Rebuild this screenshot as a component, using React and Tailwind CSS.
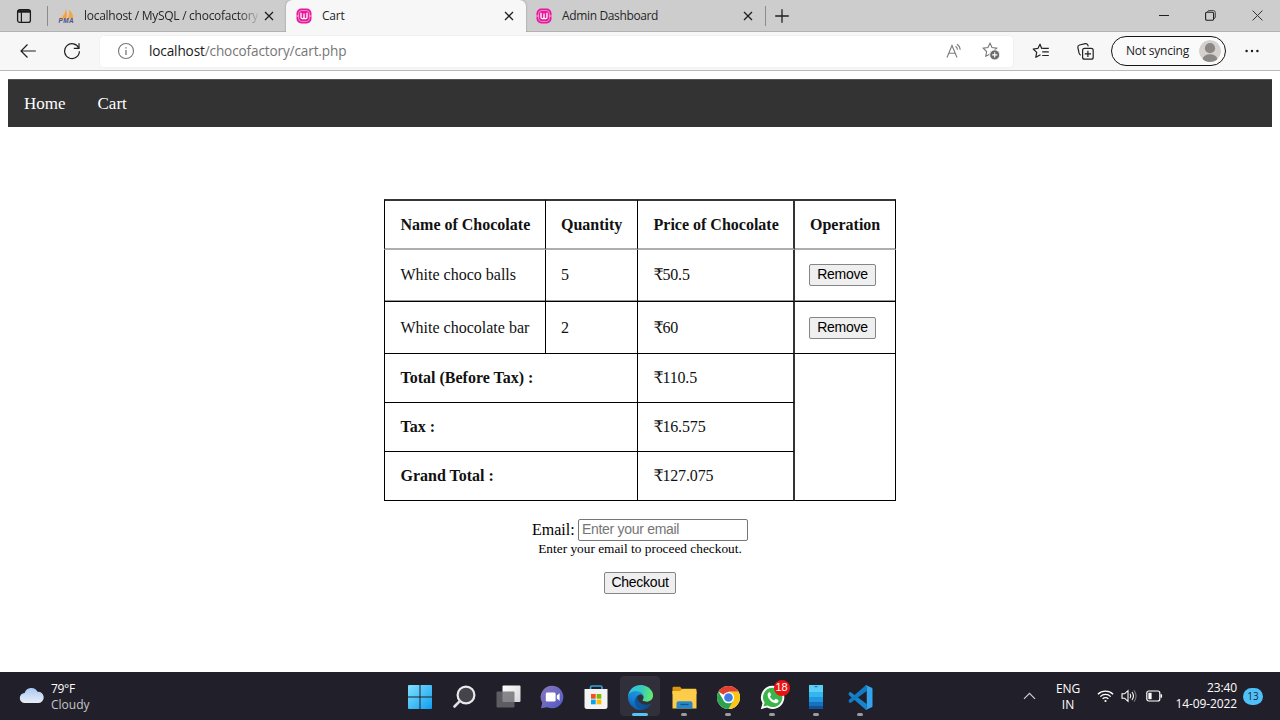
import React from "react";

const ui = "font-['Open_Sans',sans-serif]";
const serif = "font-['Liberation_Serif','DejaVu_Serif',serif]";

function TabsIcon() {
  return (
    <svg width="16" height="16" viewBox="0 0 16 16" className="block shrink-0" fill="none" stroke="#1b1b1b">
      <rect x="1.6" y="1.6" width="12.8" height="12.8" rx="2.2" strokeWidth="1.3" />
      <path d="M1.8 3.4h12.4" strokeWidth="2.6" />
      <path d="M5.4 4v10" strokeWidth="1.2" />
    </svg>
  );
}

function PmaIcon() {
  return (
    <svg width="18" height="16" viewBox="0 0 18 16" className="block shrink-0">
      <path d="M7.6 0.8C7.8 4 6 8.4 2.2 10.4h6.2C9.2 7 9 3.4 7.6 0.8z" fill="#f5a23c" />
      <path d="M11 1.6c3 2.4 4.4 6 4.2 8.8H9.6C11 7.8 11.4 4.6 11 1.6z" fill="#f3a74d" />
      <path d="M4.6 5.4C4 7.6 2.6 9.2 0.8 10.4h4z" fill="#f8be78" />
      <text x="0.6" y="15.4" fontSize="6.4" fontWeight="bold" fontStyle="italic" fill="#4b4f86" textLength="15" fontFamily="Liberation Sans">PMA</text>
    </svg>
  );
}

function WampIcon() {
  return (
    <svg width="16" height="16" viewBox="0 0 16 16" className="block shrink-0" fill="none">
      <rect x="0.5" y="0.5" width="15" height="15" rx="4.8" fill="#e8179b" />
      <rect x="2.6" y="2.5" width="10.8" height="11" rx="3" stroke="#f4a5d5" strokeWidth=".8" />
      <path d="M0.5 8h2.2M13.3 8h2.2" stroke="#f9c3e3" strokeWidth="1" />
      <path d="M5 4.8v4.4c0 2 2.9 2 3 .2V5.6v3.8c.1 1.8 3 1.8 3-.2V4.8" stroke="#fff" strokeWidth="1.3" />
    </svg>
  );
}

function Cross({ className = "" }) {
  return (
    <svg width="10" height="10" viewBox="0 0 10 10" className={"block shrink-0 " + className} fill="none" stroke="#1f1f1f" strokeWidth="1.3">
      <path d="M1 1l8 8M9 1l-8 8" />
    </svg>
  );
}

function Tab({ icon, label, active, className, labelClass }) {
  return (
    <div
      className={
        "flex h-8 items-center pl-[10px] pr-[12px] " +
        (active ? "rounded-t-md bg-[#f7f7f7] shadow-[0_0_2px_rgba(0,0,0,0.35)] [clip-path:inset(0_-2px_0_-2px)] " : "border-b border-[#b2b2b2] ") +
        className
      }
    >
      {icon}
      <span className={"whitespace-nowrap text-[12px] leading-[18px] text-[#262626] " + labelClass}>{label}</span>
      <Cross className="ml-auto" />
    </div>
  );
}

function TitleBar() {
  return (
    <div className="flex h-8 bg-[#cdcdcd]">
      <div className="flex h-8 w-[47px] items-center justify-center border-b border-[#b2b2b2] pl-[1px]"><TabsIcon /></div>
      <div className="flex h-8 w-px items-center border-b border-[#b2b2b2]"><div className="h-[20px] w-px bg-[#8b8b8b]" /></div>
      <Tab
        className="w-[238px]"
        icon={<PmaIcon />}
        label="localhost / MySQL / chocofactory"
        labelClass="ml-[8px] w-[174px] tracking-[-0.27px] [mask-image:linear-gradient(to_right,#000_155px,transparent_177px)]"
      />
      <Tab className="z-10 w-[240px]" active icon={<WampIcon />} label="Cart" labelClass="ml-[10px] tracking-[-0.2px]" />
      <Tab className="w-[239px]" icon={<WampIcon />} label="Admin Dashboard" labelClass="ml-[10px] tracking-[-0.36px]" />
      <div className="flex h-8 flex-1 items-center border-b border-[#b2b2b2]">
        <div className="h-[20px] w-px bg-[#8b8b8b]" />
        <svg width="14" height="14" viewBox="0 0 14 14" className="ml-[9px] block" stroke="#1f1f1f" strokeWidth="1.3"><path d="M7 .2v13.6M.2 7h13.6" /></svg>
        <svg width="10" height="10" viewBox="0 0 10 10" className="ml-auto block" stroke="#1f1f1f"><path d="M0 4.5h10" /></svg>
        <svg width="11" height="11" viewBox="0 0 11 11" className="ml-[36px] block" fill="none" stroke="#1f1f1f">
          <rect x="0.6" y="2.3" width="8" height="8" rx="1.2" strokeWidth="1.1" />
          <path d="M2.6 2V1.7Q2.8.6 4 .6h4.4q1.9 0 1.9 1.9V7q0 1.3-1.3 1.5" strokeWidth=".8" />
        </svg>
        <svg width="11" height="11" viewBox="0 0 11 11" className="ml-[36px] mr-[17px] block" stroke="#333"><path d="M.6.6l9.8 9.8M10.4.6L.6 10.4" /></svg>
      </div>
    </div>
  );
}

const star = "M8 1.3l2 4.3 4.7.6-3.4 3.3.8 4.7L8 12l-4.2 2.2.8-4.7L1.2 6.2l4.7-.6z";

function Toolbar() {
  return (
    <div className="flex h-[39px] items-center border-b border-[#b9b9b9] bg-[#f7f7f7]">
      <svg width="16" height="14" viewBox="0 0 16 14" className="ml-5 block" fill="none" stroke="#1f1f1f" strokeWidth="1.2"><path d="M15.8 7H.8M7.5.5L1 7l6.500 6.500" /></svg>
      <svg width="18" height="18" viewBox="0 0 18 18" className="ml-[27px] block" fill="none" stroke="#1f1f1f" strokeWidth="1.2">
        <path d="M15.800 6.200A7.400 7.400 0 1 0 16.400 9.200" /><path d="M16 1.200v5.200h-5.200" />
      </svg>
      <div className="ml-[19px] flex h-[31px] w-[913px] items-center rounded bg-white pl-[17px] pr-[13px] shadow-[0_0_2px_rgba(0,0,0,0.08)]">
        <svg width="18" height="18" viewBox="0 0 18 18" className="block" fill="none" stroke="#767676">
          <circle cx="9" cy="9" r="7.500" strokeWidth="1.100" /><path d="M9 8v5" strokeWidth="1.300" /><path d="M9 5.200v1.400" strokeWidth="1.400" />
        </svg>
        <span className="ml-[14px] whitespace-nowrap text-[13.6px] leading-[20px] tracking-[-0.14px] text-[#767676]"><span className="text-[#1a1a1a]">localhost</span>/chocofactory/cart.php</span>
        <svg width="17" height="16" viewBox="0 0 17 16" className="ml-auto block" fill="none" stroke="#7b7b7b" strokeWidth="1.100">
          <path d="M1 14.500L6 2.500l5 12M2.900 10.300h6.200" /><path d="M9.500 3.200q1.900 1.300 2 3.600M11 1.300q3 2 3.200 5.500" />
        </svg>
        <svg width="18" height="18" viewBox="0 0 18 18" className="ml-[19px] block" fill="none" stroke="#777" strokeWidth="1.100">
          <path d={star} /><circle cx="12.700" cy="12.900" r="5" fill="#6b6b6b" stroke="#fff" strokeWidth=".8" /><path d="M12.700 10.300v5.200M10.100 12.900h5.200" stroke="#fff" />
        </svg>
      </div>
      <svg width="18" height="16" viewBox="0 0 18 16" className="ml-[19px] block" fill="none" stroke="#222" strokeWidth="1.200" strokeLinejoin="round">
        <path d="M10.300 5.300H9.600L8 1.200 6 5.300l-4.800.7 3.500 3.400-.9 4.900 4.700-2.500" /><path d="M10.200 5.300h6.600M10.200 8.900h6.600M10.200 12.500h6.600" />
      </svg>
      <svg width="17" height="17" viewBox="0 0 17 17" className="ml-[27px] block" fill="none" stroke="#222" strokeWidth="1.200">
        <rect x="5.600" y="5.400" width="10.600" height="10.800" rx="2" /><path d="M10.900 7.700v6.200M7.800 10.800H14" /><path d="M3.700 12.200Q2.400 11.500 2 9.900L.9 4.600Q.6 2.600 2.500 2l5.800-1.300q1.800-.3 2.500 1.400l.5 1.300" />
      </svg>
      <div className="ml-[17px] flex h-[30px] w-[115px] items-center rounded-full border border-[#151515] bg-[#fafafa] pl-[14px]">
        <span className="w-[73px] whitespace-nowrap text-[12px] leading-[18px] tracking-[-0.22px] text-[#1a1a1a]">Not syncing</span>
        <svg width="22" height="22" viewBox="0 0 22 22" className="block">
          <clipPath id="avatar"><circle cx="11" cy="11" r="11" /></clipPath>
          <g clipPath="url(#avatar)"><circle cx="11" cy="11" r="11" fill="#d3d0ce" /><circle cx="11" cy="8.200" r="5.100" fill="#8b8784" /><ellipse cx="11" cy="19.200" rx="7.300" ry="5" fill="#8b8784" /></g>
        </svg>
      </div>
      <svg width="14" height="4" viewBox="0 0 14 4" className="ml-[19px] block" fill="#1a1a1a"><circle cx="1.600" cy="2" r="1.200" /><circle cx="7" cy="2" r="1.200" /><circle cx="12.400" cy="2" r="1.200" /></svg>
    </div>
  );
}

function Button({ children, className }) {
  return (
    <button className={"flex items-center justify-center rounded-[2px] border border-[#858585] bg-[#efefef] pb-[2px] font-['Liberation_Sans',Arial,sans-serif] text-[14px] leading-none tracking-[-0.25px] text-black " + className}>
      {children}
    </button>
  );
}

function Price({ amount }) {
  return <span><span className="tracking-[-1.3px]">₹</span><span className="tracking-[-0.15px]">{amount}</span></span>;
}

const totals = [
  { label: "Total (Before Tax) :", value: "110.5" },
  { label: "Tax :", value: "16.575" },
  { label: "Grand Total :", value: "127.075" },
];

function CartTable() {
  const base = "flex items-center whitespace-nowrap border-black ";
  const cell = base + "pl-[15.5px] ";
  const lastCol = base + "pl-[15px] ";
  const head = "border-t-2 border-b-2 border-t-[#363636] border-b-[#aeaeae] font-bold ";
  const first = "pb-px shadow-[inset_0_-1px_0_#999] ";
  return (
    <div className="mx-auto mt-[72px] grid w-[512px] grid-cols-[162px_92px_157px_101px] grid-rows-[51px_52px_52px_49px_49px_49px] text-[16px] text-[#111]">
      <div className={cell + head + "border-l border-r"}>Name of Chocolate</div>
      <div className={lastCol + head + "border-r"}>Quantity</div>
      <div className={cell + head + "border-r-2 border-r-[#333]"}>Price of Chocolate</div>
      <div className={lastCol + head + "border-r"}>Operation</div>
      <div className={cell + first + "border-b border-l border-r"}>White choco balls</div>
      <div className={lastCol + first + "border-b border-r"}>5</div>
      <div className={cell + first + "border-b border-r-2 border-r-[#333]"}><Price amount="50.5" /></div>
      <div className={lastCol + first + "border-b border-r"}><Button className="-ml-px h-[22px] w-[67px]">Remove</Button></div>
      <div className={cell + "border-b border-l border-r"}>White chocolate bar</div>
      <div className={lastCol + "border-b border-r"}>2</div>
      <div className={cell + "border-b border-r-2 border-r-[#333]"}><Price amount="60" /></div>
      <div className={lastCol + "border-b border-r"}><Button className="-ml-px h-[22px] w-[67px]">Remove</Button></div>
      <div className="col-start-4 row-span-3 row-start-4 border-b border-r border-black" />
      {totals.map((t) => (
        <React.Fragment key={t.label}>
          <div className={cell + "col-span-2 col-start-1 border-b border-l border-r font-bold"}>{t.label}</div>
          <div className={cell + "col-start-3 border-b border-r-2 border-r-[#333]"}><Price amount={t.value} /></div>
        </React.Fragment>
      ))}
    </div>
  );
}

function Page() {
  return (
    <main className={"flex-1 bg-white px-2 pt-[8px] " + serif}>
      <nav className="flex h-[48px] items-center border-t border-[#555] bg-[#333] pl-4 text-[17px] text-white">
        <span className="w-[73.5px]">Home</span>
        <span>Cart</span>
      </nav>
      <CartTable />
      <div className="mt-[18px] flex items-center justify-center text-black">
        <label className="w-[46px] text-[16px] leading-[22px]">Email:</label>
        <input placeholder="Enter your email" className="h-[22px] w-[170px] rounded-[2px] border border-[#767676] px-[3px] pb-[2px] font-['Liberation_Sans',Arial,sans-serif] text-[14px] tracking-[-0.3px] placeholder:text-[#757575]" />
      </div>
      <div className="text-center text-[13.330px] leading-[16px] text-black">Enter your email to proceed checkout.</div>
      <Button className="mx-auto mt-[15px] h-[22px] w-[72px]">Checkout</Button>
    </main>
  );
}

function Slot({ children, active, running }) {
  return (
    <div className="flex h-[48px] w-[44px] items-center justify-center">
      <div className={"flex h-10 w-10 flex-col items-center " + (active ? "rounded bg-[#312f39]" : "")}>
        <div className="mt-[8px] flex h-[26px] items-center">{children}</div>
        {active && <div className="mt-[3px] h-[3px] w-[16px] rounded-full bg-[#58c4f6]" />}
        {running && <div className="mt-[3px] h-[3px] w-[6px] rounded-full bg-[#9c9ba1]" />}
      </div>
    </div>
  );
}

function Taskbar() {
  return (
    <footer className={"flex h-[48px] items-center bg-[#211f29] text-white " + ui}>
      <div className="flex w-[398px] items-center pl-[19px]">
        <svg width="26" height="18" viewBox="0 0 26 18" className="block">
          <defs><linearGradient id="cloud" x1="0" y1="0" x2="0" y2="1"><stop offset="0" stopColor="#a9c8f5" /><stop offset="1" stopColor="#e9eef6" /></linearGradient></defs>
          <path d="M6 16a5 5 0 0 1-.4-10A7 7 0 0 1 18.600 4.800 5.600 5.600 0 0 1 19.600 16z" fill="url(#cloud)" />
        </svg>
        <div className="ml-[6px] pt-[2px] text-[12px] leading-[16px]">
          <div className="tracking-[-0.3px]">79°F</div>
          <div className="text-[#c7c6cb]">Cloudy</div>
        </div>
      </div>
      <Slot>
        <svg width="24" height="24" viewBox="0 0 24 24" className="block">
          <defs><linearGradient id="win" x1="0" y1="0" x2="1" y2="1"><stop offset="0" stopColor="#7fe2fd" /><stop offset="1" stopColor="#119df0" /></linearGradient></defs>
          <path d="M1 0h10.500v11.500H0V1q0-1 1-1zM12.500 0H23q1 0 1 1v10.500H12.500zM0 12.500h11.500V24H1q-1 0-1-1zM12.500 12.500H24V23q0 1-1 1H12.500z" fill="url(#win)" />
        </svg>
      </Slot>
      <Slot>
        <svg width="24" height="24" viewBox="0 0 24 24" className="block"><circle cx="14" cy="10" r="8.400" fill="#45434b" stroke="#e9e9ea" strokeWidth="2.200" /><path d="M7.800 16.200L2.500 21.500" stroke="#e0e0e2" strokeWidth="2.600" strokeLinecap="round" /></svg>
      </Slot>
      <Slot>
        <svg width="25" height="24" viewBox="0 0 25 24" className="block">
          <defs><linearGradient id="tv" x1="0" y1="0" x2="1" y2="1"><stop offset="0" stopColor="#fff" /><stop offset="1" stopColor="#d5d5d5" /></linearGradient></defs>
          <rect x="6.500" y=".5" width="18" height="16.500" rx="1" fill="url(#tv)" /><rect x=".5" y="6.500" width="18" height="16" rx="1" fill="#6d6b70" fillOpacity=".8" />
        </svg>
      </Slot>
      <Slot>
        <svg width="24" height="24" viewBox="0 0 24 24" className="block">
          <defs><linearGradient id="chat" x1="0" y1="0" x2="1" y2="1"><stop offset="0" stopColor="#8a78b8" /><stop offset="1" stopColor="#5059c9" /></linearGradient></defs>
          <path d="M12 .7A11.300 11.300 0 1 1 7.200 22.200L1 23.200l1.300-5.400A11.300 11.300 0 0 1 12 .7z" fill="url(#chat)" />
          <rect x="5.800" y="7.600" width="9.800" height="9" rx="1.400" fill="#fff" /><path d="M16.800 10.400l2.800-2.200v7.600l-2.800-2.200z" fill="#fff" />
        </svg>
      </Slot>
      <Slot>
        <svg width="24" height="25" viewBox="0 0 24 25" className="block">
          <path d="M6.500 5V2.500Q6.500 1 8 1h8.500Q18 1 18 2.500V5" fill="none" stroke="#35a2da" strokeWidth="1.700" />
          <path d="M.5 4h23v17.500q0 2.500-2.500 2.500H3Q.5 24 .5 21.500z" fill="#f4f3f3" />
          <path fill="#f25022" d="M7 9h4.700v4.700H7z" /><path fill="#7fba00" d="M12.600 9h4.700v4.700h-4.700z" /><path fill="#00a4ef" d="M7 14.600h4.700v4.700H7z" /><path fill="#ffb900" d="M12.600 14.600h4.700v4.700h-4.700z" />
        </svg>
      </Slot>
      <Slot active>
        <svg width="25" height="25" viewBox="0 0 256 256" className="block">
          <defs>
            <linearGradient id="e1" x1="0" y1="0" x2="1" y2="0"><stop offset="0" stopColor="#0c59a4" /><stop offset="1" stopColor="#114a8b" /></linearGradient>
            <linearGradient id="e2" x1=".6" y1="0" x2=".2" y2="1"><stop offset="0" stopColor="#1b9de2" /><stop offset=".5" stopColor="#1580d0" /><stop offset="1" stopColor="#0b55a3" /></linearGradient>
            <linearGradient id="e3" x1="0" y1=".4" x2="1" y2=".6"><stop offset="0" stopColor="#35c1f1" /><stop offset=".5" stopColor="#36c9b8" /><stop offset="1" stopColor="#66eb6e" /></linearGradient>
          </defs>
          <path d="M231 190.500c-3.400 1.800-6.900 3.400-10.500 4.700a101 101 0 0 1-35.900 6.500c-47.300 0-88.500-32.500-88.500-74.300.1-11.400 6.400-21.900 16.400-27.300-42.800 1.800-53.800 46.400-53.800 72.500 0 74 68.100 81.400 82.800 81.400 7.900 0 19.800-2.300 27-4.600l1.300-.4a128.300 128.300 0 0 0 66.600-52.800 4 4 0 0 0-5.400-5.700z" fill="url(#e1)" />
          <path d="M105.700 241.400a79.200 79.200 0 0 1-22.700-21.300 80.700 80.700 0 0 1 29.500-120c3.200-1.500 8.500-4.100 15.600-4a32.400 32.400 0 0 1 25.700 13 31.900 31.900 0 0 1 6.300 18.700c0-.2 24.500-79.600-80-79.600C36.200 48.200.2 89.900.2 126.400A130 130 0 0 0 12.400 183a128 128 0 0 0 156.300 67.200 75.500 75.500 0 0 1-62.800-8.800z" fill="url(#e2)" />
          <path d="M152.300 148.900c-.9 1-3.400 2.500-3.400 5.600 0 2.600 1.700 5.200 4.800 7.300 14.400 10.100 41.700 8.700 41.700 8.700 10.700 0 21.300-2.900 30.500-8.300a61.900 61.900 0 0 0 30.500-53.300c.3-22.400-8-37.300-11.300-43.900C223.800 23.900 177.700 0 127.700 0A128 128 0 0 0 0 126.200c.5-36.500 36.800-66 80-66 3.500 0 23.500.3 42 10.100 16.300 8.600 24.900 19 30.800 29.200 6.200 10.700 7.300 24.100 7.300 29.500 0 5.300-2.700 13.300-7.800 19.900z" fill="url(#e3)" />
        </svg>
      </Slot>
      <Slot running>
        <svg width="25" height="23" viewBox="0 0 25 23" className="block">
          <path d="M.5 2Q.5.8 1.700.8H8l2.300 2.400v3H.5z" fill="#dc9412" /><path d="M.5 5h7.500l2.500-2.200h12.800q1.200 0 1.200 1.200v4H.5z" fill="#fbcb43" />
          <path d="M.5 5.500h24v17H.5z" fill="#fbcd4a" /><path d="M4.500 22.500v-5q0-2.200 2.200-2.200h11.600q2.200 0 2.200 2.200v5z" fill="#2787c8" /><path d="M8.500 18.500h8" stroke="#12578d" strokeWidth="1.300" />
        </svg>
      </Slot>
      <Slot running>
        <svg width="23" height="23" viewBox="0 0 48 48" className="block">
          <circle cx="24" cy="24" r="24" fill="#fff" /><path d="M24 24L3.200 12A24 24 0 0 1 44.800 12H24z" fill="#e2402f" /><path d="M24 12h20.800A24 24 0 0 1 24 48l10.400-18z" fill="#fbc716" /><path d="M3.200 12A24 24 0 0 0 24 48l10.400-18A12 12 0 0 1 13.600 30z" fill="#2ba24c" />
          <circle cx="24" cy="24" r="11.600" fill="#fff" /><circle cx="24" cy="24" r="9" fill="#3e7de8" />
        </svg>
      </Slot>
      <Slot running>
        <div className="relative">
          <svg width="25" height="25" viewBox="0 0 25 25" className="block">
            <path d="M12.700.8A11.600 11.600 0 1 1 7 22.500L.8 24.200l1.700-6A11.600 11.600 0 0 1 12.700.8z" fill="#fff" /><path d="M12.700 2.700A9.700 9.700 0 1 1 7.500 20.600l-4 1 1.100-3.900A9.700 9.700 0 0 1 12.700 2.700z" fill="#39b54a" />
            <path d="M9 7.200c-3.600 2 .3 10 6.400 11 2.400.2 3.500-1.600 3-3.200l-2.700-1.300-1.600 1.600c-2-.8-3.300-2.100-4.100-3.900l1.200-1.500L10 7.200z" fill="#fff" />
          </svg>
          <span className="absolute -top-[5px] left-[14px] flex h-[16px] w-[16px] items-center justify-center rounded-full bg-[#ee1111] font-['Liberation_Sans',sans-serif] text-[11px] leading-none">18</span>
        </div>
      </Slot>
      <Slot running>
        <svg width="14" height="24" viewBox="0 0 14 24" className="block"><path fill="#58d0f7" d="M0 0h14v8H0z" /><path fill="#35b5ef" d="M0 7h14v5H0z" /><path fill="#2397e2" d="M0 12h14v5H0z" /><path fill="#1672bd" d="M0 17h14v4H0z" /><path fill="#0f549a" d="M0 21h14v3H0z" /><path d="M5.500 1.700h3" stroke="#186b9e" /></svg>
      </Slot>
      <Slot running>
        <svg width="25" height="25" viewBox="0 0 100 100" className="block">
          <path d="M3 31l7-3L75 76v23l-6-2L3 40z" fill="#1784cb" /><path d="M3 60v9l7 3L75 24V1l-6 2z" fill="#137bc4" /><path d="M73 1l22 10q3 2 3 5v68q0 3-3 5L73 99l-4-2q6 0 6-6V9q0-6-6-6z" fill="#35a4ee" />
        </svg>
      </Slot>
      <div className="flex flex-1 items-center text-[12px] leading-[16px]">
        <svg width="13" height="8" viewBox="0 0 13 8" className="ml-[141px] block" fill="none" stroke="#d0d0d4" strokeWidth="1.200"><path d="M1 6.800L6.500 1.300 12 6.800" /></svg>
        <div className="ml-[15px] w-[34px] pt-px text-center"><div className="tracking-[-0.1px]">ENG</div><div>IN</div></div>
        <svg width="17" height="14" viewBox="0 0 17 14" className="ml-[12px] block" fill="none" stroke="#fff" strokeWidth="1.300">
          <path d="M.9 5.200a10.800 10.800 0 0 1 15.200 0M3.300 7.600a7.400 7.400 0 0 1 10.400 0M5.600 9.900a4.100 4.100 0 0 1 5.800 0" /><circle cx="8.500" cy="12" r="1.100" fill="#fff" stroke="none" />
        </svg>
        <svg width="17" height="14" viewBox="0 0 17 14" className="ml-[7px] block" fill="none" stroke="#fff" strokeWidth="1.100">
          <path d="M1 4.800h2.500L7 1.700v10.600L3.500 9.200H1z" /><path d="M9 4.700q1.600 2.300 0 4.600M11 3q2.900 4 0 8" /><path d="M13 1.300q4.200 5.700 0 11.400" stroke="#777" />
        </svg>
        <svg width="17" height="12" viewBox="0 0 17 12" className="ml-[8px] block" fill="none" stroke="#fff" strokeWidth="1.200">
          <rect x=".8" y="1" width="13" height="10" rx="2" /><path d="M15.300 4.300v3.400" strokeWidth="1.500" /><rect x="2.400" y="2.800" width="3.200" height="6.400" fill="#fff" stroke="none" />
        </svg>
        <div className="ml-auto whitespace-nowrap text-right tracking-[-0.1px]"><div>23:40</div><div>14-09-2022</div></div>
        <div className="ml-[6px] mr-[17px] flex h-[17px] w-[20px] items-center justify-center rounded-full bg-[#4fc0f8] text-[10px] leading-none text-[#1b2b38]">13</div>
      </div>
    </footer>
  );
}

export default function App() {
  return (
    <div className="flex h-[720px] w-[1280px] flex-col overflow-hidden bg-white">
      <header className={ui}>
        <TitleBar />
        <Toolbar />
      </header>
      <Page />
      <Taskbar />
    </div>
  );
}
